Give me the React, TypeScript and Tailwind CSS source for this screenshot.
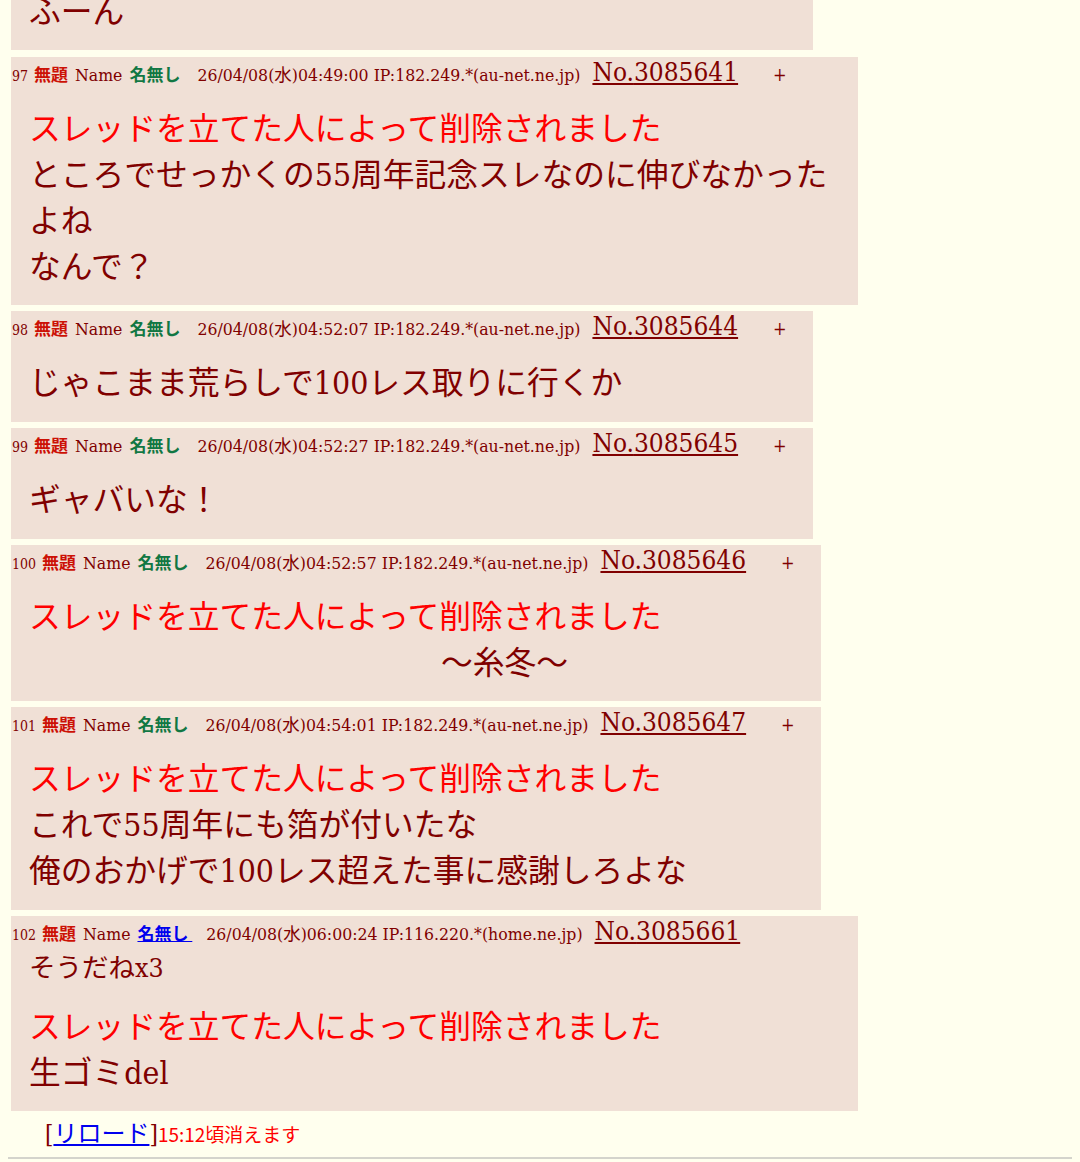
import React from "react"

const serif = "font-['DejaVu_Serif_Condensed','DejaVu_Serif','Noto_Sans_CJK_JP',serif]"
const sans = "font-['Noto_Sans_CJK_JP',sans-serif]"

type Post = {
  no: number
  id: string
  date: string
  ip: string
  width: string
  pb: string
  mail?: boolean
  sod?: string
  deleted?: boolean
  lines: { text: string; indent?: string }[]
}

const posts: Post[] = [
  {
    no: 97,
    id: "3085641",
    date: "26/04/08(水)04:49:00",
    ip: "182.249.*(au-net.ne.jp)",
    width: "w-[847px]",
    pb: "pb-[15px]",
    deleted: true,
    lines: [
      { text: "ところでせっかくの55周年記念スレなのに伸びなかった" },
      { text: "よね" },
      { text: "なんで？" },
    ],
  },
  {
    no: 98,
    id: "3085644",
    date: "26/04/08(水)04:52:07",
    ip: "182.249.*(au-net.ne.jp)",
    width: "w-[802px]",
    pb: "pb-[16px]",
    lines: [{ text: "じゃこまま荒らしで100レス取りに行くか" }],
  },
  {
    no: 99,
    id: "3085645",
    date: "26/04/08(水)04:52:27",
    ip: "182.249.*(au-net.ne.jp)",
    width: "w-[802px]",
    pb: "pb-[16px]",
    lines: [{ text: "ギャバいな！" }],
  },
  {
    no: 100,
    id: "3085646",
    date: "26/04/08(水)04:52:57",
    ip: "182.249.*(au-net.ne.jp)",
    width: "w-[810px]",
    pb: "pb-[15px]",
    deleted: true,
    lines: [{ text: "〜糸冬〜", indent: "pl-[412px]" }],
  },
  {
    no: 101,
    id: "3085647",
    date: "26/04/08(水)04:54:01",
    ip: "182.249.*(au-net.ne.jp)",
    width: "w-[810px]",
    pb: "pb-[16px]",
    deleted: true,
    lines: [
      { text: "これで55周年にも箔が付いたな" },
      { text: "俺のおかげで100レス超えた事に感謝しろよな" },
    ],
  },
]

function Header({ p }: { p: Post }) {
  return (
    <div className={`flex items-baseline h-[36px] leading-[30px] whitespace-nowrap pl-[1px] ${serif}`}>
      <span className="text-[14px]">{p.no}</span>
      <span className={`ml-[6px] text-[17px] font-bold text-[#cc1105] ${sans}`}>無題</span>
      <span className="ml-[7px] text-[17.5px]">Name</span>
      {p.mail ? (
        <a className={`ml-[7px] text-[17px] font-bold text-[#0000ee] underline ${sans}`}>名無し&nbsp;</a>
      ) : (
        <span className={`ml-[7px] text-[17px] font-bold text-[#117743] ${sans}`}>名無し</span>
      )}
      <span className={p.mail ? "ml-[14px] text-[17.5px]" : "ml-[17px] text-[17.5px]"}>
        {p.date} IP:{p.ip}
      </span>
      <a className="ml-[12px] text-[26px] underline text-[#800000]">No.{p.id}</a>
      {!p.mail && <span className="ml-[35px] text-[18px]">+</span>}
    </div>
  )
}

function Reply({ p, first }: { p: Post; first?: boolean }) {
  return (
    <div className={`${p.width} ${p.pb} ${first ? "mt-[7px]" : "mt-[6px]"} bg-[#f0e0d6]`}>
      <Header p={p} />
      {p.sod && (
        <div className={`h-[32px] pl-[18px] text-[26.5px] leading-[32px] ${serif}`}>{p.sod}</div>
      )}
      <div className={`${p.sod ? "mt-[20px]" : "mt-[13px]"} pl-[18px] text-[31.75px] leading-[46px] whitespace-nowrap ${serif}`}>
        {p.deleted && <div className="h-[46px] text-[#ff0000]">スレッドを立てた人によって削除されました</div>}
        {p.lines.map((l, i) => (
          <div key={i} className={`h-[46px] ${l.indent ?? ""}`}>
            {l.text}
          </div>
        ))}
      </div>
    </div>
  )
}

export default function App() {
  const last: Post = {
    no: 102,
    id: "3085661",
    date: "26/04/08(水)06:00:24",
    ip: "116.220.*(home.ne.jp)",
    width: "w-[847px]",
    pb: "pb-[15px]",
    mail: true,
    sod: "そうだねx3",
    deleted: true,
    lines: [{ text: "生ゴミdel" }],
  }

  return (
    <div className="min-h-screen bg-[#ffffee] text-[#800000] overflow-hidden">
      <div className="flex flex-col pl-[11px]">
        <div className={`w-[802px] h-[61px] -mt-[11px] bg-[#f0e0d6] pl-[18px] text-[31.75px] leading-[46px] ${serif}`}>
          ふーん
        </div>
        {posts.map((p, i) => (
          <Reply key={p.id} p={p} first={i === 0} />
        ))}
        <Reply p={last} />
        <div className="h-[32px] mt-[5px] pl-[34px] leading-[32px] whitespace-nowrap">
          <span className={`text-[24px] ${serif}`}>[</span>
          <a className={`text-[24px] text-[#0000ee] underline ${sans}`}>リロード</a>
          <span className={`text-[24px] ${serif}`}>]</span>
          <span className={`text-[19px] text-[#ff0000] ${sans}`}>15:12頃消えます</span>
        </div>
      </div>
      <div className="mx-[8px] mt-[9px] border-t-2 border-[#d4d4cc]" />
    </div>
  )
}
